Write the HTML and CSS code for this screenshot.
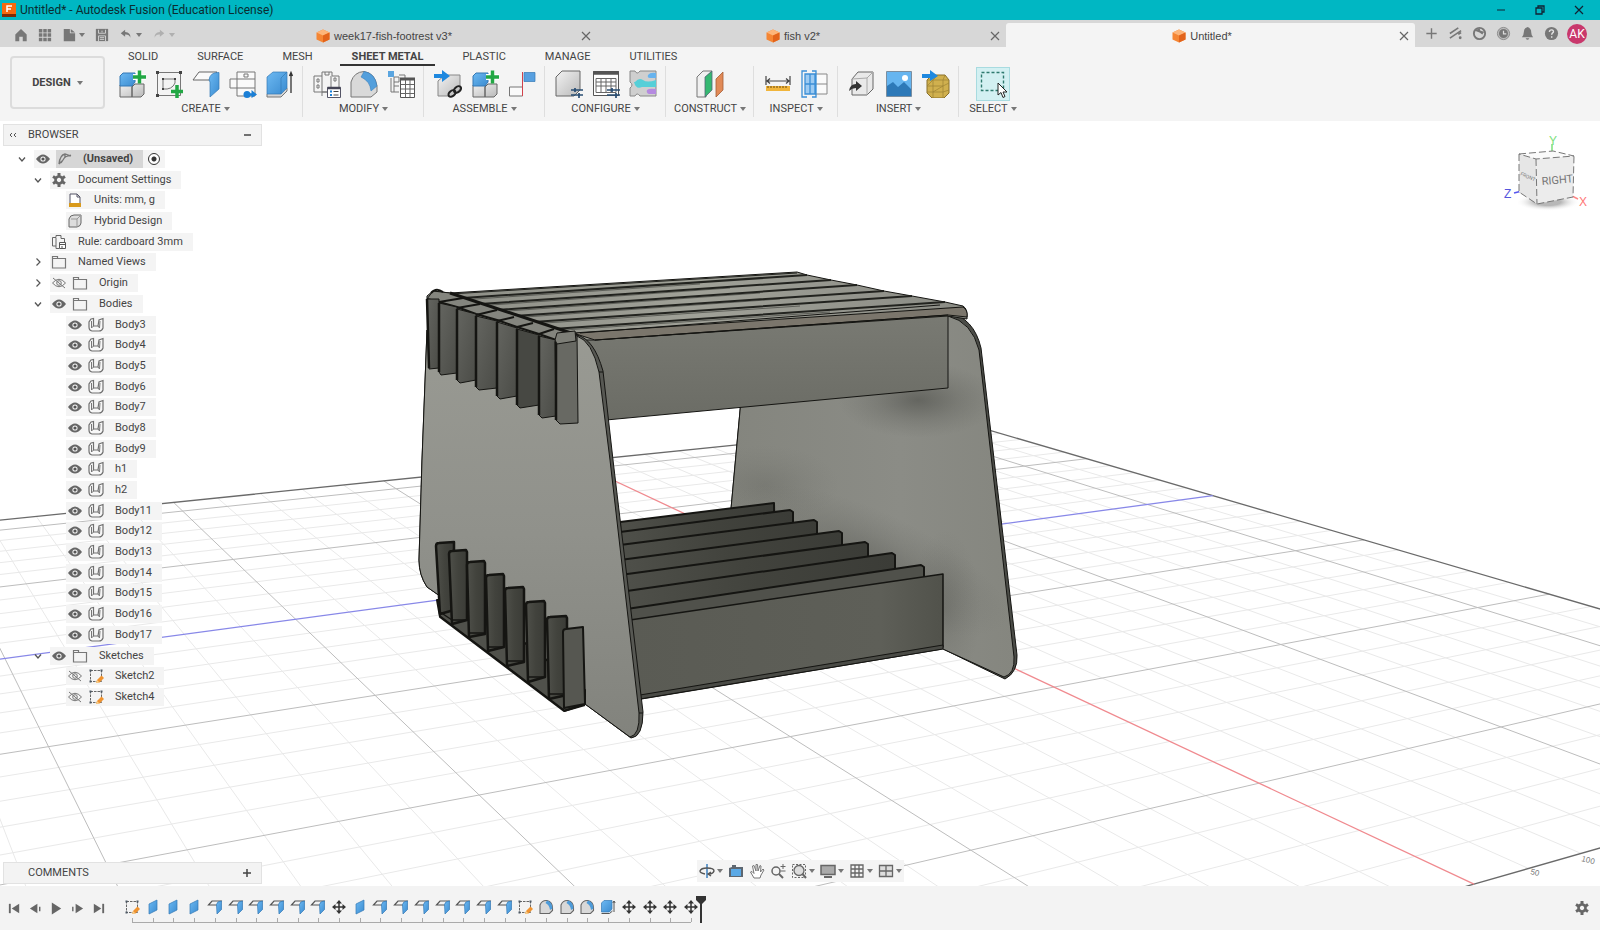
FILE: index.html
```html
<!DOCTYPE html>
<html lang="en">
<head>
<meta charset="utf-8">
<title>Untitled* - Autodesk Fusion (Education License)</title>
<link rel="stylesheet" href="styles.css">
</head>
<body>
<svg class="defs" aria-hidden="true">
  <defs>
    <linearGradient id="gBlue" x1="0" y1="0" x2="1" y2="1"><stop offset="0" stop-color="#6db9f2"/><stop offset="1" stop-color="#3a8bd0"/></linearGradient>
    <linearGradient id="gGrey" x1="0" y1="0" x2="1" y2="1"><stop offset="0" stop-color="#f2f2f2"/><stop offset="1" stop-color="#b9b9b9"/></linearGradient>
  </defs>
  <symbol id="eye" viewBox="0 0 16 16"><path d="M1 8Q8-1 15 8Q8 17 1 8Z" fill="#666"/><circle cx="8" cy="8" r="2.600" fill="#f4f4f4"/><circle cx="8" cy="8" r="1.600" fill="#555"/></symbol>
  <symbol id="eyeoff" viewBox="0 0 16 16"><path d="M1.500 8Q8 .5 14.500 8Q8 15.500 1.500 8ZM2 3l12 10" fill="none" stroke="#777"/><circle cx="8" cy="8" r="2.300" fill="none" stroke="#777"/></symbol>
  <symbol id="folder" viewBox="0 0 16 16"><path d="M1.500 14V2.500h5v2H14.500V14ZM1.500 4.500h6" fill="none" stroke="#777" stroke-width="1.200"/></symbol>
  <symbol id="body" viewBox="0 0 16 16"><path d="M3 2L5.500 1.500V9h4.500L11 3L15 1.500V11Q14 14 11 14H4Q1 13.500 1 10V5Z" fill="#f7f7f7" stroke="#707070" stroke-width="1.200"/><path d="M5.500 9L3.500 11V4M10 9l1.500 2M11.500 11L12 4" fill="none" stroke="#777"/></symbol>
  <symbol id="sketch" viewBox="0 0 16 16"><path d="M2.500 2.500h11v11h-11Z" fill="none" stroke="#666" stroke-dasharray="2.500 1"/><path d="M1.500 1.500h2v2h-2ZM12.500 1.500h2v2h-2ZM1.500 12.500h2v2h-2Z" fill="#4d5965"/><path d="M8 15l1-3 4.500-4.500 2.500 2.500-4.500 4.500Z" fill="#f0932f"/><path d="M8 15l1-3 2.500 2.500Z" fill="#f6cf8f"/></symbol>
  <symbol id="gear" viewBox="0 0 16 16"><path d="M8 4.500a3.500 3.500 0 1 0 .01 0Z" fill="none" stroke="#666" stroke-width="2.600"/><path d="M8 1v3M8 12v3M2 4.500l2.500 1.500M11.500 10l2.500 1.500M2 11.500L4.500 10M11.500 6L14 4.500" stroke="#666" stroke-width="3"/></symbol>
  <symbol id="cube" viewBox="0 0 14 14"><path d="M7 .5L13.500 3.500V10.500L7 13.500L.5 10.500V3.500Z" fill="#f58634"/><path d="M.5 3.500L7 6.500L13.500 3.500L7 .5Z" fill="#fdb57a"/><path d="M7 6.500V13.500L13.500 10.500V3.500Z" fill="#e2631b"/></symbol>
  <symbol id="chevD" viewBox="0 0 16 16"><path d="M5 6.500L8 10l3-3.500" fill="none" stroke="#555" stroke-width="1.300"/></symbol>
  <symbol id="chevR" viewBox="0 0 16 16"><path d="M6.500 4.500L10 8l-3.500 3.500" fill="none" stroke="#555" stroke-width="1.200"/></symbol>
  <symbol id="rule" viewBox="0 0 16 16"><path d="M1.500 3.500H5V1.500h5v3h3.500V8M1.500 3.500V12H5v2.500h3M5 4v8" fill="none" stroke="#666"/><path d="M8.500 8.500h6v6h-6ZM8.500 10.500h6M11 12v2" fill="#fff" stroke="#555"/></symbol>
  <symbol id="plane" viewBox="0 0 16 16"><path d="M4 5l8-4v10l-8 4Z" fill="url(#gBlue)" stroke="#3478b5" stroke-width=".7"/></symbol>
  <symbol id="flange" viewBox="0 0 16 16"><path d="M1.500 6L5 2h9L11 6Z" fill="#f2f2f2" stroke="#555" stroke-width="1.200"/><path d="M9.500 5.500Q10 2 14.500 2V10.500L10 15Z" fill="url(#gBlue)" stroke="#3478b5" stroke-width=".7"/></symbol>
  <symbol id="move" viewBox="0 0 16 16"><path d="M8 3v10M3 8h10" stroke="#333" stroke-width="1.500"/><path d="M8 1l3 3.500H5ZM8 15l3-3.500H5ZM1 8l3.500-3v6ZM15 8l-3.500-3v6Z" fill="#333"/></symbol>
  <symbol id="fillet" viewBox="0 0 16 16"><path d="M2 14.500V6Q4 1 9 1.500Q14.500 3 14.500 9V11.500L11.500 14.500Z" fill="#d8d8d8" stroke="#666" stroke-width="1.100"/><path d="M9 1.500Q14 2.500 14.500 9.500L12 11Q11.500 6 7.500 4Z" fill="#4d9bd9"/></symbol>
  <symbol id="extrude" viewBox="0 0 16 16"><path d="M1.500 4L4 1.500h8V10L9.500 13h-8Z" fill="url(#gBlue)" stroke="#3478b5" stroke-width=".7"/><path d="M1.500 14.500H9.500L12.500 12M14 2V13M12.800 4L14 2l1.200 2" fill="none" stroke="#555"/></symbol>
</svg>

<header class="titlebar">
  <svg class="logo" viewBox="0 0 14 14"><path d="M0 0h14v14H0Z" fill="#f4690f"/><path d="M0 11h14v3H0Z" fill="#7d2c06"/><path d="M5 9V3h5M5 6h4" stroke="#fff" stroke-width="1.500" fill="none"/></svg>
  <h1>Untitled* - Autodesk Fusion (Education License)</h1>
  <div class="winbtns">
    <button aria-label="Minimize"><svg viewBox="0 0 12 12"><path d="M2 6h8" stroke="#123"/></svg></button>
    <button aria-label="Restore"><svg viewBox="0 0 12 12"><path d="M2 4h6v6H2ZM4 4V2h6v6H8" fill="none" stroke="#123" stroke-width="1.300"/></svg></button>
    <button aria-label="Close window"><svg viewBox="0 0 12 12"><path d="M2 2l8 8M10 2l-8 8" stroke="#123" stroke-width="1.200"/></svg></button>
  </div>
</header>

<div class="tabbar">
  <div class="quick">
    <button aria-label="Home"><svg viewBox="0 0 16 16"><path d="M8 1L14.500 7.500V15H10V10H6v5H1.500V7.500Z" fill="#777"/></svg></button>
    <button aria-label="Data panel"><svg viewBox="0 0 16 16"><path d="M1 1h4v4H1ZM6 1h4v4H6ZM11 1h4v4h-4ZM1 6h4v4H1ZM6 6h4v4H6ZM11 6h4v4h-4ZM1 11h4v4H1ZM6 11h4v4H6ZM11 11h4v4h-4Z" fill="#777"/></svg></button>
    <button class="wide" aria-label="File"><svg viewBox="0 0 16 16"><path d="M2 1h7v5h6v9H2ZM10 1l5 4h-5Z" fill="#777"/></svg><i class="caret"></i></button>
    <button aria-label="Save"><svg viewBox="0 0 16 16"><path d="M1 1h14v14H1Z" fill="#777"/><path d="M4 2v4h8V2M4 15V9h8v6M5.500 11h5M5.500 13h5M8 3v2" fill="none" stroke="#d8d8d8"/></svg></button>
    <button class="wide" aria-label="Undo"><svg viewBox="0 0 16 16"><path d="M7 2L2 6l5 4V7.500Q11.500 7 13 11Q13.500 5 7 4.500Z" fill="#777"/></svg><i class="caret"></i></button>
    <button class="wide faded" aria-label="Redo"><svg viewBox="0 0 16 16"><path d="M9 2l5 4-5 4V7.500Q4.500 7 3 11Q2.500 5 9 4.500Z" fill="#777"/></svg><i class="caret"></i></button>
  </div>
  <nav class="tabs" aria-label="Documents">
    <div class="tab"><a href="#t1"><svg><use href="#cube"/></svg>week17-fish-footrest v3*</a><button aria-label="Close tab 1"><svg viewBox="0 0 12 12"><path d="M2 2l8 8M10 2l-8 8" stroke="#666" stroke-width="1.200"/></svg></button></div>
    <div class="tab"><a href="#t2"><svg><use href="#cube"/></svg>fish v2*</a><button aria-label="Close tab 2"><svg viewBox="0 0 12 12"><path d="M2 2l8 8M10 2l-8 8" stroke="#666" stroke-width="1.200"/></svg></button></div>
    <div class="tab active"><a href="#t3"><svg><use href="#cube"/></svg>Untitled*</a><button aria-label="Close tab 3"><svg viewBox="0 0 12 12"><path d="M2 2l8 8M10 2l-8 8" stroke="#666" stroke-width="1.200"/></svg></button></div>
  </nav>
  <div class="tools">
    <button aria-label="New design"><svg viewBox="0 0 16 16"><path d="M8 2.500v11M2.500 8h11" stroke="#777" stroke-width="1.500"/></svg></button>
    <button aria-label="Extensions"><svg viewBox="0 0 16 16"><path d="M2 8l9-6M2 13L14 5M11 9l3-2" stroke="#777" stroke-width="1.700"/><circle cx="13" cy="12.500" r="1.500" fill="#777"/></svg></button>
    <button aria-label="Online status"><svg viewBox="0 0 16 16"><circle cx="8" cy="8" r="6" fill="none" stroke="#777" stroke-width="2"/><path d="M3 5l5-3 1 3 4 1-2 3-3-2" fill="#777"/></svg></button>
    <button aria-label="Job status"><svg viewBox="0 0 16 16"><circle cx="8" cy="8" r="6.500" fill="#bbb" stroke="#8a8a8a"/><circle cx="8" cy="8" r="4.800" fill="#777"/><path d="M8 5v3.500h3" stroke="#ddd" stroke-width="1.300" fill="none"/></svg></button>
    <button aria-label="Notifications"><svg viewBox="0 0 16 16"><path d="M8 1Q12 2 12 7Q12 10 14 12H2Q4 10 4 7Q4 2 8 1ZM6 13h4Q8 16.500 6 13Z" fill="#777"/></svg></button>
    <button aria-label="Help"><svg viewBox="0 0 16 16"><circle cx="8" cy="8" r="7" fill="#777"/><path d="M5.700 6.300Q6 4 8.200 4.100Q10.500 4.500 10 6.500Q8.200 7.800 8.200 9.200M8.200 10.800v1.600" stroke="#e4e4e4" stroke-width="1.500" fill="none"/></svg></button>
    <button class="avatar">AK</button>
  </div>
</div>

<div class="ribbon">
  <button class="workspace">DESIGN<i class="caret"></i></button>
  <div class="ribbon-main">
    <nav class="rtabs" aria-label="Ribbon">
      <a href="#solid">SOLID</a><a href="#surface">SURFACE</a><a href="#mesh">MESH</a><a href="#sm" class="on">SHEET METAL</a><a href="#plastic">PLASTIC</a><a href="#manage">MANAGE</a><a href="#util">UTILITIES</a>
    </nav>
    <div class="groups">
      <section class="group">
        <div class="icons">
          <button aria-label="New component"><svg viewBox="0 0 28 28"><path d="M2 15h12v12H2ZM14 17l3-3h9v10l-3 3H14Z" fill="url(#gGrey)" stroke="#666"/><path d="M2 6l3-3h12v9l-3 4H2Z" fill="url(#gBlue)" stroke="#3478b5"/><path d="M21 1v12M15 7h13" stroke="#fff" stroke-width="6"/><path d="M21.500 .5v13M15 7h13" stroke="#22a744" stroke-width="3.500"/></svg></button>
          <button aria-label="Create sketch"><svg viewBox="0 0 28 28"><path d="M2.500 2.500h23v23h-23ZM8 9h12v4q-3 7-12 6Z" fill="none" stroke="#777"/><path d="M1 1h3v3H1ZM24 1h3v3h-3ZM1 24h3v3H1ZM7 8h2v2H7ZM19 8h2v2h-2ZM7 18h2v2H7Z" fill="#444"/><path d="M22 15v13M16 21.500h12" stroke="#22a744" stroke-width="3.500"/></svg></button>
          <button aria-label="Flange"><svg viewBox="0 0 28 28"><path d="M1 10L7 2h18l-7 8Z" fill="#fafafa" stroke="#666"/><path d="M17 10Q18 2 27 2.500V19L18 27V12Z" fill="url(#gBlue)" stroke="#3478b5" stroke-width=".7"/></svg></button>
          <button aria-label="Unfold"><svg viewBox="0 0 28 28"><path d="M8 9V2h18v24H8V18H1V9Z" fill="#fafafa" stroke="#777"/><path d="M8 9h18M8 18h18M8 9v9M15 4h4v3h-4Z" fill="none" stroke="#777"/><circle cx="18" cy="24.500" r="3.500" fill="#1b7fd6"/><path d="M18 24.500h6" stroke="#1b7fd6" stroke-width="2.500"/><path d="M22.500 20l5.500 4.500-5.500 3.500Z" fill="#1b7fd6"/></svg></button>
          <button aria-label="Extrude"><svg viewBox="0 0 28 28"><path d="M1 24v3h14l6-6v-3" fill="#d5d5d5" stroke="#777"/><path d="M1 7l6-5h14v16l-6 6H1Z" fill="url(#gBlue)" stroke="#3478b5" stroke-width=".7"/><path d="M15 24V8l6-6" fill="none" stroke="#3478b5" stroke-width=".7"/><path d="M25 23V3M23.500 6L25 2.500l1.500 3.500" fill="none" stroke="#333" stroke-width="1.300"/></svg></button>
        </div><button class="glabel">CREATE<i class="caret"></i></button>
      </section>
      <section class="group">
        <div class="icons">
          <button aria-label="Sheet metal rules"><svg viewBox="0 0 28 28"><path d="M1 6h8V2h10v4h7v16H9v4M1 6v16h8M9 6v16h9V6" fill="none" stroke="#777"/><path d="M4 9h2v3H4ZM4 15h2v3H4ZM21 8h2v3h-2ZM12 2v3h4V2" fill="none" stroke="#777"/><path d="M14.500 17.500h13v10h-13Z" fill="#fff" stroke="#556"/><path d="M14.500 18h13" stroke="#445" stroke-width="2.500"/><path d="M17 21.500h2M17 25h2" stroke="#1b7fd6" stroke-width="2"/><path d="M20.500 21.500h5M20.500 25h5" stroke="#444"/></svg></button>
          <button aria-label="Fillet"><svg viewBox="0 0 28 28"><path d="M1 27V12Q4 2 14 1.500Q25 3 27 16v6l-6 5Z" fill="#d9d9d9" stroke="#777"/><path d="M14 1.500Q25 3 27 16l-6 5Q20 11 11 7Z" fill="#539fdc" stroke="#3478b5" stroke-width=".5"/></svg></button>
          <button aria-label="Parameters"><svg viewBox="0 0 28 28"><path d="M1 1h6v6H1Z" fill="#5aa5e0"/><path d="M7 7h5v5H7ZM4 8v14h8M7 16h5M7 12v10M12 5h6v4" fill="none" stroke="#777"/><path d="M13.500 8.500h14v19h-14Z" fill="#fff" stroke="#555"/><path d="M13 9h15" stroke="#555" stroke-width="3"/><path d="M14 14.500h13M14 19h13M14 23.500h13M18.500 10v17M23 10v17" stroke="#666"/></svg></button>
        </div><button class="glabel">MODIFY<i class="caret"></i></button>
      </section>
      <section class="group">
        <div class="icons">
          <button aria-label="Insert derive"><svg viewBox="0 0 28 28"><path d="M4 11l7-6h15v14l-6 7H4Z" fill="url(#gGrey)" stroke="#888"/><path d="M0 4h8V0l8 6-8 6V8H0Z" fill="#1e88df"/><ellipse cx="18" cy="23.500" rx="4" ry="2.700" transform="rotate(-40 18 23.500)" fill="none" stroke="#222" stroke-width="2"/><ellipse cx="23.500" cy="19.500" rx="4" ry="2.700" transform="rotate(-40 23.500 19.500)" fill="none" stroke="#222" stroke-width="2"/></svg></button>
          <button aria-label="Assemble component"><svg viewBox="0 0 28 28"><path d="M2 15h12v12H2ZM14 17l3-3h9v10l-3 3H14Z" fill="url(#gGrey)" stroke="#666"/><path d="M2 6l3-3h12v9l-3 4H2Z" fill="url(#gBlue)" stroke="#3478b5"/><path d="M21 1v12M15 7h13" stroke="#fff" stroke-width="6"/><path d="M21.500 .5v13M15 7h13" stroke="#22a744" stroke-width="3.500"/></svg></button>
          <button aria-label="Joint"><svg viewBox="0 0 28 28"><path d="M1.500 17h13v9h-13Z" fill="#fafafa" stroke="#777"/><path d="M16 2.500h11v9H16Z" fill="#58a0e0" stroke="#3478b5" stroke-width=".7"/><path d="M14.500 2v24" stroke="#d1414b"/></svg></button>
        </div><button class="glabel">ASSEMBLE<i class="caret"></i></button>
      </section>
      <section class="group">
        <div class="icons">
          <button aria-label="Configure model"><svg viewBox="0 0 28 28"><path d="M1 7l6-6h18v19l-6 6H1Z" fill="url(#gGrey)" stroke="#666"/><path d="M16 20h12M16 25h12M20 18v4M24 23v5" stroke="#294d73" stroke-width="1.700"/></svg></button>
          <button aria-label="Configuration table"><svg viewBox="0 0 28 28"><path d="M1.500 1.500h25v24h-25Z" fill="#fff" stroke="#555"/><path d="M1 3h26" stroke="#555" stroke-width="3.500"/><path d="M4 8.500h20v14H4ZM4 12h20M4 16h20M9 8v14M14 8v14M19 8v14" fill="none" stroke="#666"/><path d="M15 20h13M15 25h13M20 18v4M24 23v5" stroke="#294d73" stroke-width="1.700"/></svg></button>
          <button aria-label="Configuration rules"><svg viewBox="0 0 28 28"><path d="M1 1h5q2 4 5 0h16v25H11q-3-4-5 0H1v-8q4-3 0-6Z" fill="#cfcfcf" stroke="#888"/><path d="M19 5q2-3 8-2v5h-6q-3 0-2-3Z" fill="#67b3ee"/><path d="M6 12q4-5 8-2t13 0v7H13q-6 3-8-5Z" fill="#56cfd8"/><path d="M18 20q2-2 9-1v5h-7q-3-1-2-4Z" fill="#b58ae0"/></svg></button>
        </div><button class="glabel">CONFIGURE<i class="caret"></i></button>
      </section>
      <section class="group">
        <div class="icons">
          <button aria-label="Offset plane"><svg viewBox="0 0 28 28"><path d="M1 7l6-6h9L10 7v20H1Z" fill="#f0f0f0" stroke="#777"/><path d="M9 7l7-6v19l-7 7Z" fill="#35b871" stroke="#567" stroke-width=".8"/><path d="M20 9l7-7v18l-7 7Z" fill="#e18a57" stroke="#a65d36" stroke-width=".8"/></svg></button>
        </div><button class="glabel spaced">CONSTRUCT<i class="caret"></i></button>
      </section>
      <section class="group">
        <div class="icons">
          <button aria-label="Measure"><svg viewBox="0 0 28 28"><path d="M2 6v9M26 6v9M3 11h22M6 8.500L3 11l3 2.500M22 8.500l3 2.500-3 2.500" fill="none" stroke="#444" stroke-width="1.200"/><path d="M2 16h24v5H2Z" fill="#f1b53b"/><path d="M4 16v2M7 16v2M10 16v2M13 16v2M16 16v2M19 16v2M22 16v2" stroke="#6a4a10"/></svg></button>
          <button aria-label="Section analysis"><svg viewBox="0 0 28 28"><path d="M14 4h12v20H14ZM14 14h12" fill="#fafafa" stroke="#888"/><path d="M4 4h10v20H4Z" fill="#9dcbf2"/><path d="M4 4h10v20H4ZM4 14h10M9 4v20M6 1H1v26h5M11 1h4v26h-4" fill="none" stroke="#3b8fd6" stroke-width="1.300"/></svg></button>
        </div><button class="glabel">INSPECT<i class="caret"></i></button>
      </section>
      <section class="group">
        <div class="icons">
          <button aria-label="Insert part"><svg viewBox="0 0 28 28"><path d="M4 9l6-7h15v17l-6 6H4Z" fill="#e9e9e9" stroke="#666"/><path d="M19 25V8l6-6M4 9l15-1" fill="none" stroke="#aaa"/><path d="M1 21q1-7 7-7v-3l6 5-6 5v-3q-4 0-7 3Z" fill="#333"/></svg></button>
          <button aria-label="Insert canvas"><svg viewBox="0 0 28 28"><path d="M1.500 1.500h25v25h-25Z" fill="#66b5f0" stroke="#7a8ea0"/><path d="M2 16l6-4 5 5 6-5 7 7v7H2Z" fill="#2d79b8"/><circle cx="20" cy="8" r="3" fill="#fff"/></svg></button>
          <button aria-label="Insert mesh"><svg viewBox="0 0 28 28"><path d="M5 10l5-5h13l4 5v13l-5 5H10l-5-5Z" fill="#d0b04e" stroke="#8a712a"/><path d="M5 10h16v18M21 10l6 0M21 10l2-5M5 16h16l6-3M5 22h16l6-2M11 10v18M16 5l-5 5M5 16l6-6M11 22l10-6" fill="none" stroke="#9c8233" stroke-width=".7"/><path d="M0 4h8V0l8 6-8 5V8H0Z" fill="#1e88df"/></svg></button>
        </div><button class="glabel">INSERT<i class="caret"></i></button>
      </section>
      <section class="group">
        <div class="icons">
          <button class="sel" aria-label="Select"><svg viewBox="0 0 28 28"><path d="M2.500 2.500h22v18h-22Z" fill="none" stroke="#2f7a6f" stroke-width="1.400" stroke-dasharray="3 2"/><path d="M19 13v12l3-2.500 2 5 2-1-2-4.500h4Z" fill="#fff" stroke="#222"/></svg></button>
        </div><button class="glabel">SELECT<i class="caret"></i></button>
      </section>
    </div>
  </div>
</div>

<main class="viewport">
  <svg class="scene" viewBox="0 121 1600 765" preserveAspectRatio="xMidYMid slice" role="img" aria-label="3D model of a stool">
    <defs>
      <linearGradient id="side" x1="0" y1="0" x2="0" y2="1"><stop offset="0" stop-color="#999a93"/><stop offset=".5" stop-color="#90918b"/><stop offset="1" stop-color="#82837d"/></linearGradient>
      <linearGradient id="side2" x1="0" y1="0" x2="1" y2="0"><stop offset="0" stop-color="#84857e"/><stop offset=".6" stop-color="#8b8c86"/><stop offset="1" stop-color="#85867f"/></linearGradient>
      <linearGradient id="beam" x1="0" y1="0" x2="0" y2="1"><stop offset="0" stop-color="#797a73"/><stop offset="1" stop-color="#6b6c65"/></linearGradient>
      <linearGradient id="low" x1="0" y1="0" x2="1" y2="0"><stop offset="0" stop-color="#5a5b54"/><stop offset=".8" stop-color="#5e5f58"/><stop offset="1" stop-color="#51524b"/></linearGradient>
      <linearGradient id="slat" x1="0" y1="0" x2="1" y2="0"><stop offset="0" stop-color="#4f504a"/><stop offset=".5" stop-color="#42433d"/><stop offset="1" stop-color="#3b3c37"/></linearGradient>
      <linearGradient id="top" x1="0" y1="0" x2="1" y2="0"><stop offset="0" stop-color="#8d8e86"/><stop offset=".5" stop-color="#a0a198"/><stop offset="1" stop-color="#8b8c85"/></linearGradient>
      <linearGradient id="stub" x1="0" y1="0" x2="1" y2="1"><stop offset="0" stop-color="#646560"/><stop offset="1" stop-color="#4b4c47"/></linearGradient>
      <radialGradient id="shade"><stop offset="0" stop-color="#4b4c47" stop-opacity=".7"/><stop offset=".5" stop-color="#4b4c47" stop-opacity=".28"/><stop offset="1" stop-color="#5b5c57" stop-opacity="0"/></radialGradient>
      <clipPath id="panelR"><path d="M741 400L730 520L943 649L1004 677Q1015 674 1014 657L979 350Q972 322 948 316L948 389Z"/></clipPath>
    </defs>
    <g id="grid" fill="none"></g>
    <g class="ruler"><text transform="translate(1530 874) rotate(14)">50</text><text transform="translate(1581 861) rotate(14)">100</text></g>

    <g stroke="#151512" stroke-linejoin="round">
      <path d="M948 312Q974 318 981 348L1017 655Q1018 672 1005 679L943 649L730 520L741 400Z" fill="#4b4c47"/>
      <path d="M741 400L730 520L943 649L1004 677Q1015 674 1014 657L979 350Q972 322 948 316Z" fill="url(#side2)"/>
      <g clip-path="url(#panelR)" stroke="none">
        <ellipse cx="918" cy="400" rx="80" ry="38" fill="url(#shade)" opacity=".85"/>
        <ellipse cx="765" cy="485" rx="75" ry="40" fill="url(#shade)" opacity=".3"/>
        <ellipse cx="870" cy="560" rx="150" ry="50" transform="rotate(24 870 560)" fill="url(#shade)" opacity=".6"/>
        <ellipse cx="945" cy="610" rx="36" ry="80" fill="url(#shade)" opacity=".4"/>
      </g>
      <g fill="url(#slat)" stroke-width="2">
        <path d="M620 522L774 503L775 560L622 600Z"/>
        <path d="M620 532L790 510L793 512V560L622 600Z"/>
        <path d="M620 545L814 520L817 522V570L622 600Z"/>
        <path d="M620 560L839 531L842 533V580L622 610Z"/>
        <path d="M620 575L865 542L868 544V590L622 620Z"/>
        <path d="M620 592L892 553L895 555V600L622 630Z"/>
        <path d="M620 610L921 565L924 567V610L622 640Z" fill="#50514b"/>
      </g>
      <path d="M630 620L943 574V647L941 649L640 699Z" fill="url(#low)" stroke-width="1.500"/>
      <path d="M640 695L943 645V649L640 699Z" fill="#4a4b46"/>
      <path d="M573 333L948 314V388L606 420Z" fill="url(#beam)"/>
      <path d="M427 296L433 291L450 293L797 272L807 275L831 280L857 285L884 291L912 296L945 302L963 306Q968 309 967 319L948 316L595 340L556 340L427 299Z" fill="url(#top)"/>
      <path d="M573 333L963 307Q968 310 967 317L948 315L595 340Z" fill="#7b766c"/>
      <path d="M595 340L948 315M580 333L940 305" fill="none"/>
      <g fill="none" stroke-width="2" stroke="#22231f">
        <path d="M450 294L797 273" stroke-width="1"/>
        <path d="M463 298L807 275M480 304L831 280M497 310L857 285M514 316L884 291M533 322L912 296M553 329L945 302"/>
        <path d="M460 300L700 284M477 306L730 288M494 312L760 293M511 318L780 299M530 324L800 306M550 331L830 312" stroke-width="1" opacity=".5"/>
      </g>
      <path d="M427 330L556 338L577 335Q594 339 603 371L613 460L643 712Q643 737 631 738L585 704L437 594L427 587Q419 575 419 560L422 460Z" fill="#575853"/>
      <path d="M427 330L556 338L577 336Q592 341 599 372L610 460L639 713Q640 735 630 737L585 704L437 594L427 587Q419 575 419 560L422 460Z" fill="url(#side)"/>
      <path d="M599 372h4M639 713h4"/>
      <path d="M427 299L433 291L450 293L577 335L556 345L427 305Z" fill="#84857e"/>
      <path d="M450 293L577 335" stroke-width="3"/>
      <path d="M439 302L463 298M457 308L480 304M476 315L497 310M497 321L514 317M517 327L533 323M539 334L554 329" stroke-width="2"/>
      <path d="M427 299L439 302L457 307L476 314L497 320L517 327L539 334L556 340" fill="none" stroke-width="2"/>
      <g fill="url(#stub)">
        <path d="M427 299H439V368L429 369Z"/>
        <path d="M439 303L457 307V373L441 375L439 372Z"/>
        <path d="M457 309L476 314V380L460 383L457 380Z"/>
        <path d="M476 316L497 321V388L479 390L476 387Z"/>
        <path d="M497 322L517 328V396L500 399L497 396Z"/>
        <path d="M517 329L539 335V405L520 408L517 405Z" fill="#474843"/>
        <path d="M539 336L556 340V416L542 418L539 415Z"/>
        <path d="M555 341L577 335L578 423L560 424L556 420Z" fill="#686963"/>
      </g>
      <path d="M427 299L429 368M439 303V372M457 309V380M476 316V387M497 322V396M517 329V405M539 336V415M556 342V420" stroke-width="2.500"/>
      <path d="M555 340L557 333L575 331L576 341L557 344Z" fill="#7d7e77"/>
      <path d="M431 293Q436 287 443 292" fill="none" stroke-width="2"/>

      <path d="M437 600L440 617L564 711L585 704V690L470 600Z" fill="#50514b" stroke-width="2"/>
      <g fill="url(#slat)" stroke-width="2.500">
        <path d="M436 546Q436 543 439 543L454 542V610L440 614Z"/>
        <path d="M449 554Q449 551 452 551L466 550L467 552V620L452 624Z"/>
        <path d="M467 565Q467 562 470 562L484 561L485 563V634L469 637Z"/>
        <path d="M486 578Q486 575 489 575L503 574L504 576V647L488 651Z"/>
        <path d="M505 591Q505 588 508 588L523 587L524 589V662L507 666Z"/>
        <path d="M526 605Q526 602 529 602L544 601L545 603V677L528 682Z"/>
        <path d="M547 620Q547 617 550 617L566 616L567 618V695L549 699Z"/>
        <path d="M563 632Q563 629 566 629L583 627L585 704L564 708Z" fill="#565751" stroke-width="2"/>
      </g>
      <path d="M452 620H466M469 633H485M488 647H504M507 661H524M528 677H545M549 694H563M440 612L452 620M440 616L564 710" stroke-width="1.500" fill="none"/>
      <path d="M564 711L585 705" stroke-width="2"/>
    </g>
  </svg>

  <svg class="viewcube" viewBox="0 0 96 84" role="img" aria-label="View cube">
    <defs><radialGradient id="cs"><stop offset=".4" stop-color="#999" stop-opacity=".7"/><stop offset="1" stop-color="#fff" stop-opacity="0"/></radialGradient></defs>
    <ellipse cx="48" cy="70" rx="32" ry="9" fill="url(#cs)"/>
    <path d="M52 12v9" stroke="#7be07b" stroke-width="1.500"/><path d="M14 61l8-2" stroke="#55e" stroke-width="1.500"/><path d="M72 64l6 3" stroke="#f88" stroke-width="1.500"/>
    <path d="M19 22L53 19L74 24L36 27Z" fill="#fafafa"/><path d="M19 22L36 27L37 72L19 60Z" fill="#e6e6e6"/><path d="M36 27L74 24L73 65L37 72Z" fill="#ececec"/>
    <path d="M19 22L53 19L74 24L36 27ZM19 22L19 60L37 72L73 65L74 24M36 27L37 72" fill="none" stroke="#777" stroke-dasharray="7 3"/>
    <text x="42" y="53" class="face" transform="rotate(-5 42 53)">RIGHT</text>
    <text x="20" y="43" class="face small" transform="rotate(24 20 43)">FRONT</text>
    <text x="49" y="13" class="ax" fill="#7be07b">Y</text><text x="4" y="66" class="ax" fill="#55d">Z</text><text x="79" y="74" class="ax" fill="#f77">X</text>
  </svg>

  <aside class="browser">
    <div class="phead"><button aria-label="Collapse"><svg viewBox="0 0 12 12"><path d="M5 4L3 6l2 2M9 4L7 6l2 2" fill="none" stroke="#555"/></svg></button><span>BROWSER</span><button class="end" aria-label="Minimize browser"><svg viewBox="0 0 12 12"><path d="M3 6h7" stroke="#444" stroke-width="1.500"/></svg></button></div>
    <ul class="tree">
      <li><svg><use href="#chevD"/></svg><div class="chip root"><svg><use href="#eye"/></svg><b><svg viewBox="0 0 16 16"><path d="M2 13q1-9 6-10l6 2M4 12l4-6 6-2M8 3v4M2 13l3-3" fill="none" stroke="#777" stroke-width="1.300"/></svg><span>(Unsaved)</span></b><input type="radio" checked aria-label="Activate (Unsaved)"></div></li>
      <li class="l1"><svg><use href="#chevD"/></svg><div class="chip"><svg><use href="#gear"/></svg><span>Document Settings</span></div></li>
      <li class="l2"><i></i><div class="chip"><svg viewBox="0 0 16 16"><path d="M3 12V2h7l3 3v7" fill="#fff" stroke="#556"/><path d="M10 2v3h3" fill="none" stroke="#556"/><path d="M2 11h12v4H2Z" fill="#d99a1c"/></svg><span>Units: mm, g</span></div></li>
      <li class="l2"><i></i><div class="chip"><svg viewBox="0 0 16 16"><path d="M2 6q1-4 5-4h7v8q0 3-4 4H2Z" fill="#ddd" stroke="#666"/><path d="M4 6h6v8M10 6l4-4" fill="none" stroke="#999"/></svg><span>Hybrid Design</span></div></li>
      <li class="l1"><i></i><div class="chip"><svg><use href="#rule"/></svg><span>Rule: cardboard 3mm</span></div></li>
      <li class="l1"><svg><use href="#chevR"/></svg><div class="chip"><svg><use href="#folder"/></svg><span>Named Views</span></div></li>
      <li class="l1"><svg><use href="#chevR"/></svg><div class="chip"><svg><use href="#eyeoff"/></svg><svg><use href="#folder"/></svg><span>Origin</span></div></li>
      <li class="l1"><svg><use href="#chevD"/></svg><div class="chip"><svg><use href="#eye"/></svg><svg><use href="#folder"/></svg><span>Bodies</span></div></li>
      <li class="l2"><i></i><div class="chip"><svg><use href="#eye"/></svg><svg><use href="#body"/></svg><span>Body3</span></div></li>
      <li class="l2"><i></i><div class="chip"><svg><use href="#eye"/></svg><svg><use href="#body"/></svg><span>Body4</span></div></li>
      <li class="l2"><i></i><div class="chip"><svg><use href="#eye"/></svg><svg><use href="#body"/></svg><span>Body5</span></div></li>
      <li class="l2"><i></i><div class="chip"><svg><use href="#eye"/></svg><svg><use href="#body"/></svg><span>Body6</span></div></li>
      <li class="l2"><i></i><div class="chip"><svg><use href="#eye"/></svg><svg><use href="#body"/></svg><span>Body7</span></div></li>
      <li class="l2"><i></i><div class="chip"><svg><use href="#eye"/></svg><svg><use href="#body"/></svg><span>Body8</span></div></li>
      <li class="l2"><i></i><div class="chip"><svg><use href="#eye"/></svg><svg><use href="#body"/></svg><span>Body9</span></div></li>
      <li class="l2"><i></i><div class="chip"><svg><use href="#eye"/></svg><svg><use href="#body"/></svg><span>h1</span></div></li>
      <li class="l2"><i></i><div class="chip"><svg><use href="#eye"/></svg><svg><use href="#body"/></svg><span>h2</span></div></li>
      <li class="l2"><i></i><div class="chip"><svg><use href="#eye"/></svg><svg><use href="#body"/></svg><span>Body11</span></div></li>
      <li class="l2"><i></i><div class="chip"><svg><use href="#eye"/></svg><svg><use href="#body"/></svg><span>Body12</span></div></li>
      <li class="l2"><i></i><div class="chip"><svg><use href="#eye"/></svg><svg><use href="#body"/></svg><span>Body13</span></div></li>
      <li class="l2"><i></i><div class="chip"><svg><use href="#eye"/></svg><svg><use href="#body"/></svg><span>Body14</span></div></li>
      <li class="l2"><i></i><div class="chip"><svg><use href="#eye"/></svg><svg><use href="#body"/></svg><span>Body15</span></div></li>
      <li class="l2"><i></i><div class="chip"><svg><use href="#eye"/></svg><svg><use href="#body"/></svg><span>Body16</span></div></li>
      <li class="l2"><i></i><div class="chip"><svg><use href="#eye"/></svg><svg><use href="#body"/></svg><span>Body17</span></div></li>
      <li class="l1"><svg><use href="#chevD"/></svg><div class="chip"><svg><use href="#eye"/></svg><svg><use href="#folder"/></svg><span>Sketches</span></div></li>
      <li class="l2"><i></i><div class="chip"><svg><use href="#eyeoff"/></svg><svg><use href="#sketch"/></svg><span>Sketch2</span></div></li>
      <li class="l2"><i></i><div class="chip"><svg><use href="#eyeoff"/></svg><svg><use href="#sketch"/></svg><span>Sketch4</span></div></li>
    </ul>
  </aside>

  <div class="phead comments"><i></i><span>COMMENTS</span><button class="end" aria-label="Add comment"><svg viewBox="0 0 12 12"><path d="M6 2v8M2 6h8" stroke="#444" stroke-width="1.500"/></svg></button></div>

  <div class="navbar">
    <button class="dd" aria-label="Orbit"><svg viewBox="0 0 16 16"><path d="M8 1v14" stroke="#3b7fbf" stroke-width="1.500"/><path d="M6 11Q1 10 1 8Q2 5 8 5Q15 5 15 8Q14 11 10 11M12 9l-3 2 3 2" fill="none" stroke="#555" stroke-width="1.400"/></svg><i class="caret"></i></button>
    <button aria-label="Look at"><svg viewBox="0 0 16 16"><path d="M1 5l3-1V2h4v2h7v10H1Z" fill="#5c6670"/><path d="M3 6h10v7H3Z" fill="#5aa9e6"/></svg></button>
    <button aria-label="Pan"><svg viewBox="0 0 16 16"><path d="M5 15L1.500 9L3 8.500L5 10.500L3.500 3L5 2.500L7 8V1.500H8.500L9 8L11 2.500L12 3L11.500 9L14 6L15 7L12 12L11 15Z" fill="#fff" stroke="#777"/></svg></button>
    <button aria-label="Zoom"><svg viewBox="0 0 16 16"><circle cx="6" cy="8" r="4" fill="none" stroke="#666" stroke-width="1.500"/><path d="M9 11l4 4" stroke="#666" stroke-width="2"/><path d="M13 1v5M10.500 3.500h5M10.500 8h5" stroke="#666"/></svg></button>
    <button class="dd" aria-label="Fit"><svg viewBox="0 0 16 16"><path d="M1.500 1.500h13v13h-13Z" fill="none" stroke="#666" stroke-dasharray="2 1.500"/><circle cx="8" cy="7.500" r="5" fill="#ddd" stroke="#666" stroke-width="1.300"/><path d="M11.500 11l3.500 4" stroke="#666" stroke-width="2"/></svg><i class="caret"></i></button>
    <button class="dd" aria-label="Display settings"><svg viewBox="0 0 16 16"><path d="M1 2.500h14v9H1Z" fill="#aaa" stroke="#666" stroke-width="1.500"/><path d="M4 14h8" stroke="#666" stroke-width="2"/></svg><i class="caret"></i></button>
    <button class="dd" aria-label="Grid and snaps"><svg viewBox="0 0 16 16"><path d="M2 2h12v12H2ZM6 2v12M10 2v12M2 6h12M2 10h12" fill="none" stroke="#666" stroke-width="1.300"/></svg><i class="caret"></i></button>
    <button class="dd" aria-label="Viewports"><svg viewBox="0 0 16 16"><path d="M1.500 2.500h13v11h-13ZM8 2.500v11M1.500 8h13" fill="#ddd" stroke="#666" stroke-width="1.300"/></svg><i class="caret"></i></button>
  </div>
</main>

<footer class="timeline">
  <div class="play">
    <button aria-label="To start"><svg viewBox="0 0 16 16"><path d="M3 3v10" stroke="#666" stroke-width="2"/><path d="M13 3v10L5 8Z" fill="#666"/></svg></button>
    <button aria-label="Step back"><svg viewBox="0 0 16 16"><path d="M10 3v10L2 8Z" fill="#666"/><path d="M12.500 6v5" stroke="#666" stroke-width="1.500"/></svg></button>
    <button aria-label="Play"><svg viewBox="0 0 16 16"><path d="M3 1.500v13L13 8Z" fill="#666"/></svg></button>
    <button aria-label="Step forward"><svg viewBox="0 0 16 16"><path d="M6 3v10l8-5Z" fill="#666"/><path d="M3 6v5" stroke="#666" stroke-width="1.500"/></svg></button>
    <button aria-label="To end"><svg viewBox="0 0 16 16"><path d="M3 3v10l8-5Z" fill="#666"/><path d="M13 3v10" stroke="#666" stroke-width="2"/></svg></button>
  </div>
  <ol class="steps">
    <li><svg><use href="#sketch"/></svg></li><li><svg><use href="#plane"/></svg></li><li><svg><use href="#plane"/></svg></li><li><svg><use href="#plane"/></svg></li>
    <li><svg><use href="#flange"/></svg></li><li><svg><use href="#flange"/></svg></li><li><svg><use href="#flange"/></svg></li><li><svg><use href="#flange"/></svg></li><li><svg><use href="#flange"/></svg></li><li><svg><use href="#flange"/></svg></li>
    <li><svg><use href="#move"/></svg></li><li><svg><use href="#plane"/></svg></li>
    <li><svg><use href="#flange"/></svg></li><li><svg><use href="#flange"/></svg></li><li><svg><use href="#flange"/></svg></li><li><svg><use href="#flange"/></svg></li><li><svg><use href="#flange"/></svg></li><li><svg><use href="#flange"/></svg></li><li><svg><use href="#flange"/></svg></li>
    <li><svg><use href="#sketch"/></svg></li><li><svg><use href="#fillet"/></svg></li><li><svg><use href="#fillet"/></svg></li><li><svg><use href="#fillet"/></svg></li><li><svg><use href="#extrude"/></svg></li>
    <li><svg><use href="#move"/></svg></li><li><svg><use href="#move"/></svg></li><li><svg><use href="#move"/></svg></li><li><svg><use href="#move"/></svg></li>
  </ol>
  <svg class="marker" viewBox="0 0 12 28"><path d="M1 1h10v4L7 9v19H5V9L1 5Z" fill="#333"/></svg>
  <button class="settings" aria-label="Timeline settings"><svg><use href="#gear"/></svg></button>
</footer>
<script src="grid.js"></script>
</body>
</html>
```
FILE: styles.css
```css
* { box-sizing: border-box; }
body { margin: 0; height: 100vh; display: flex; flex-direction: column; overflow: hidden; background: #fff; color: #444; font: 11px/16px Roboto, "Liberation Sans", sans-serif; }
button { border: 0; padding: 0; margin: 0; background: none; color: inherit; font: inherit; display: flex; align-items: center; justify-content: center; }
a { color: inherit; text-decoration: none; }
ul, ol { list-style: none; margin: 0; padding: 0; }
svg { display: block; flex: none; width: 16px; height: 16px; }
.defs { position: absolute; width: 0; height: 0; }
.caret { border: 3px solid transparent; border-top: 4px solid #777; border-bottom: 0; flex: none; }

.titlebar { flex: none; height: 20px; background: #00b7c3; display: flex; align-items: center; gap: 4px; padding-left: 2px; }
.titlebar h1 { margin: 0; flex: 1; font: 12px/20px Roboto, sans-serif; color: #0b2c30; }
.logo { width: 14px; height: 14px; }
.winbtns { display: flex; padding-right: 2px; }
.winbtns button { width: 39px; height: 18px; }
.winbtns svg { width: 12px; height: 12px; }

.tabbar { flex: none; height: 27px; background: #d7d7d7; display: flex; padding-top: 3px; }
.quick { width: 188px; padding-left: 9px; display: flex; align-items: center; }
.quick button { width: 24px; height: 20px; }
.quick button svg { width: 14px; height: 14px; }
.quick .wide { width: 33px; gap: 3px; }
.faded { opacity: .4; }
.tabs { flex: 1; display: flex; font: 11px/16px "Liberation Sans", sans-serif; }
.tab { flex: 1; display: flex; align-items: center; padding: 1px 5px 0 0; }
.tab a { flex: 1; display: flex; align-items: center; justify-content: center; gap: 4px; }
.tab a svg { width: 14px; height: 14px; }
.tab button svg { width: 12px; height: 12px; }
.tab.active { background: #f4f4f4; border-radius: 3px 3px 0 0; }
.tools { display: flex; align-items: center; padding: 0 13px 3px 4px; }
.tools button { width: 24px; height: 20px; }
.tools svg { width: 15px; height: 15px; }
.tools .avatar { width: 20px; height: 20px; margin-left: 4px; border-radius: 50%; background: #c9386c; color: #fff; font-size: 12px; }

.ribbon { flex: none; height: 74px; background: #f4f4f4; display: flex; padding-left: 10px; gap: 8px; }
.workspace { width: 95px; height: 53px; margin-top: 9px; border: 2px solid #dcdcdc; border-radius: 4px; gap: 6px; font-weight: 700; }
.rtabs { display: flex; gap: 15px; padding-left: 3px; height: 19px; }
.rtabs a { padding: 3px 12px 0; border-bottom: 2px solid transparent; line-height: 14px; }
.rtabs .on { font-weight: 700; border-color: #333; }
.groups { display: flex; }
.group { display: flex; flex-direction: column; align-items: center; padding: 1px 4px 0 5px; border-right: 1px solid #dedede; height: 51px; }
.group:first-child { padding-left: 0; }
.group:last-child { border: 0; padding-left: 10px; }
.icons { display: flex; }
.icons button { width: 37px; height: 34px; }
.icons svg { width: 28px; height: 28px; }
.icons .sel { width: 34px; background: #d3f0f2; border: 1px solid #a8dbe0; }
.glabel { gap: 3px; line-height: 16px; }
.spaced { padding: 0 3px; }

.viewport { flex: 1; position: relative; min-height: 0; }
.scene { position: absolute; inset: 0; width: 100%; height: 100%; }
.ruler text { font: 8px "Liberation Sans", sans-serif; fill: #777; }
.major { stroke: #bdbdbd; }
.minor { stroke: #e9e9e9; }
.edge { stroke: #6a6a6a; stroke-width: 1.300; }
.axis-x { stroke: #f08a8f; stroke-width: 1.300; }
.axis-z { stroke: #8888e8; stroke-width: 1.300; }
.viewcube { position: absolute; right: 4px; top: 11px; width: 96px; height: 84px; }
.face { font: 11px Roboto, sans-serif; fill: #777; }
.face.small { font-size: 5px; }
.ax { font: 12px "Liberation Sans", sans-serif; }

.browser { position: absolute; left: 3px; top: 3px; width: 259px; }
.phead { height: 22px; display: flex; align-items: center; background: #f3f3f3; border: 1px solid #e2e2e2; }
.phead button:first-child, .phead i { width: 18px; }
.phead span { padding-left: 6px; flex: 1; }
.phead .end { width: 28px; }
.phead svg { width: 12px; height: 12px; }
.comments { position: absolute; left: 3px; bottom: 2px; width: 259px; }
.tree { height: 556px; margin-top: 4px; padding-left: 11px; display: flex; flex-direction: column; justify-content: space-between; }
.tree li { display: flex; gap: 4px; height: 18px; align-items: center; }
.tree li > i { width: 16px; }
.tree .l1 { padding-left: 16px; }
.tree .l2 { padding-left: 32px; }
.chip { display: flex; align-items: center; gap: 3px; height: 18px; background: #f4f4f4; padding: 0 10px 0 1px; }
.chip > svg { width: 16px; height: 16px; margin-right: 2px; }
.chip span { padding-left: 6px; }
.chip b { display: flex; align-items: center; height: 18px; background: #d6d6d6; padding: 0 10px 0 1px; gap: 4px; }
.root { padding-right: 5px; }
.root input { appearance: none; width: 12px; height: 12px; margin: 0 0 0 2px; border: 1px solid #333; border-radius: 50%; background: radial-gradient(circle, #333 2px, #fff 3px); }

.navbar { position: absolute; left: 697px; bottom: 4px; height: 22px; background: #f4f4f4; display: flex; align-items: center; gap: 5px; padding: 0 2px; }
.navbar svg { width: 16px; height: 16px; }
.navbar .dd { gap: 2px; }

.timeline { flex: none; height: 44px; background: #f3f3f3; display: flex; padding-right: 10px; }
.play { display: flex; width: 123px; padding-left: 4px; height: 44px; align-items: center; }
.play button { width: 21px; }
.play svg { width: 15px; height: 15px; }
.steps { width: 577px; height: 37px; padding-top: 13px; display: flex; justify-content: space-between; position: relative; }
.steps li { width: 18px; position: relative; }
.steps li svg { margin: 0 1px; }
.steps li::after { content: ""; position: absolute; left: 9px; bottom: 1px; height: 4px; border-left: 1px solid #aaa; }
.steps::after { content: ""; position: absolute; left: 9px; right: 9px; bottom: 0; border-top: 1px solid #aaa; }
.marker { width: 12px; height: 28px; margin: 9px 0 0 -5px; }
.settings { margin-left: auto; width: 16px; }
```
FILE: grid.js
```js
// Projects floor coordinates (u along X, v along -Z, in major grid units) to the scene.
function project(u, v) {
  var w = 1 - 0.1044 * u + 0.06 * v;
  return ((772.6 + 30.7 * u + 256.2 * v) / w).toFixed(1) + " " + ((555 - 5.7 * u + 5 * v) / w).toFixed(1);
}
var U0 = -11, U1 = 19, V0 = -18, V1 = 12;
var paths = { minor: "", major: "", edge: "", "axis-x": "", "axis-z": "" };
function kind(i, lo, hi, axis) {
  if (i === 0) return axis;
  if (i === lo || i === hi) return "edge";
  return i % 5 === 0 ? "major" : "minor";
}
for (var i = U0; i <= U1; i++) paths[kind(i, U0, U1, "axis-z")] += "M" + project(i / 5, V0 / 5) + "L" + project(i / 5, V1 / 5);
for (var j = V0; j <= V1; j++) paths[kind(j, V0, V1, "axis-x")] += "M" + project(U0 / 5, j / 5) + "L" + project(U1 / 5, j / 5);
Object.keys(paths).forEach(function (k) {
  var p = document.createElementNS("http://www.w3.org/2000/svg", "path");
  p.setAttribute("class", k);
  p.setAttribute("d", paths[k]);
  document.getElementById("grid").appendChild(p);
});
```
